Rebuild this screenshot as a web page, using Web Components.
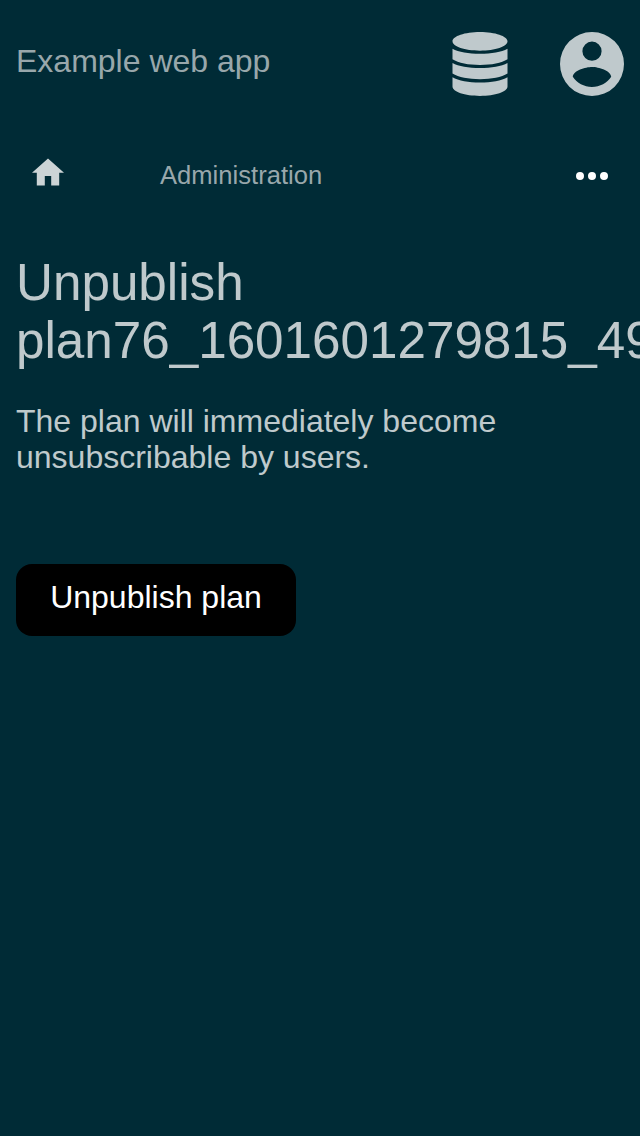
<!DOCTYPE html>
<html lang="en">
<head>
<meta charset="utf-8">
<title>Unpublish plan</title>
<style>
html { background: #002b36; }
body { margin: 0; overflow: hidden; height: 1136px; font-family: "Liberation Sans", Arial, sans-serif; color: rgba(255,255,255,.75); }
</style>
</head>
<body>
<admin-page></admin-page>
<script>
const icons = {
  database: ['-4.5 0 64 64', 'M0 9.3C0 4.2 12.3 0 27.5 0S55 4.2 55 9.3C55 14.6 42.7 18.7 27.5 18.7S0 14.6 0 9.3zM0 16.7C6 20 16 21.7 27.5 21.7S49 20 55 16.7V27.3C49 31 39 33 27.5 33S6 31 0 27.3zM0 30.9C6 34.2 16 36 27.5 36S49 34.2 55 30.9V41.6C49 45.3 39 47.3 27.5 47.3S6 45.3 0 41.6zM0 45.2C6 48.7 16 50.6 27.5 50.6S49 48.7 55 45.2V54.6C55 59.8 42.7 64 27.5 64S0 59.8 0 54.6z'],
  account: ['2 2 20 20', 'M12 19.2C9.5 19.2 7.29 17.92 6 16C6.03 14 10 12.9 12 12.9C14 12.9 17.97 14 18 16C16.71 17.92 14.5 19.2 12 19.2M12 5A3 3 0 0 1 15 8A3 3 0 0 1 12 11A3 3 0 0 1 9 8A3 3 0 0 1 12 5M12 2A10 10 0 0 0 2 12A10 10 0 0 0 12 22A10 10 0 0 0 22 12A10 10 0 0 0 12 2Z'],
  home: ['2 1.5 20 20', 'M10 20v-6h4v6h5v-8h3L12 3 2 12h3v8z'],
  more: ['0 0 32 32', 'M0 16a4 4 0 1 0 8 0a4 4 0 1 0-8 0M12 16a4 4 0 1 0 8 0a4 4 0 1 0-8 0M24 16a4 4 0 1 0 8 0a4 4 0 1 0-8 0']
};

function define(name, html) {
  customElements.define(name, class extends HTMLElement {
    constructor() {
      super();
      const template = document.createElement('template');
      template.innerHTML = html;
      this.attachShadow({ mode: 'open' }).append(template.content.cloneNode(true));
    }
  });
}

customElements.define('app-icon', class extends HTMLElement {
  connectedCallback() {
    const [box, path] = icons[this.getAttribute('name')];
    const root = this.shadowRoot || this.attachShadow({ mode: 'open' });
    root.innerHTML = `<style>
      :host { display: block; width: var(--icon-size, 64px); height: var(--icon-size, 64px); flex: none; }
      svg { display: block; width: 100%; height: 100%; }
    </style><svg viewBox="${box}" aria-hidden="true"><path fill="currentColor" fill-rule="evenodd" d="${path}"/></svg>`;
  }
});

define('app-header', `<style>
  :host { display: flex; justify-content: space-between; height: 128px; padding: 32px 16px; box-sizing: border-box; }
  .title { font-size: 32px; line-height: 36px; padding-top: 11px; color: #98a7ab; }
  .tools { display: flex; gap: 48px; }
</style><div class="title"><slot></slot></div>
<div class="tools"><app-icon name="database"></app-icon><app-icon name="account"></app-icon></div>`);

define('app-nav', `<style>
  :host { display: flex; align-items: center; height: 96px; padding: 0 32px; box-sizing: border-box; --icon-size: 32px; }
  .home { color: rgba(255,255,255,.8); padding-bottom: 8px; }
  .link { flex: 1; margin-left: 96px; padding-bottom: 2px; font-size: 25.6px; line-height: 29px; color: #98a7ab; }
  .more { color: #fff; }
</style><app-icon class="home" name="home"></app-icon><div class="link"><slot></slot></div><app-icon class="more" name="more"></app-icon>`);

define('app-button', `<style>
  :host { display: block; }
  button { display: block; width: 280px; height: 72px; margin: 0; padding: 0 0 6px; border: 0; border-radius: 16px; background: #000; color: #fff; font: 32px/36px "Liberation Sans", Arial, sans-serif; }
</style><button type="button"><slot></slot></button>`);

define('plan-content', `<style>
  :host { display: block; padding: 30px 16px 0; }
  h1 { margin: 0; font-size: 51.2px; line-height: 58px; font-weight: 400; }
  p { margin: 33px 0 89px; font-size: 32px; line-height: 36px; }
</style><h1><slot name="title"></slot></h1><p><slot></slot></p><slot name="action"></slot>`);

define('admin-page', `<style>
  :host { display: block; width: 640px; height: 1136px; overflow: hidden; background: #002b36; }
</style>
<app-header>Example web app</app-header>
<app-nav>Administration</app-nav>
<plan-content><span slot="title">Unpublish plan76_1601601279815_49</span>The plan will immediately become unsubscribable by users.<app-button slot="action">Unpublish plan</app-button></plan-content>`);
</script>
</body>
</html>
